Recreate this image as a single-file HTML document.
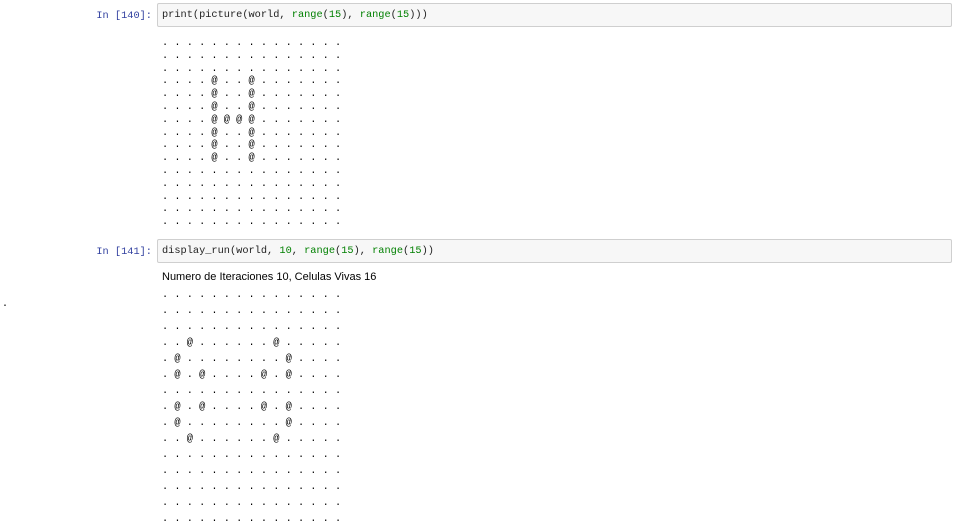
<!DOCTYPE html>
<html><head><style>
body{margin:0;background:#fff;width:962px;height:531px;overflow:hidden;position:relative;font-family:"Liberation Mono",monospace;}
.p{position:absolute;color:#303F9F;font-size:10.3px;right:810px;text-align:right;white-space:pre}
.box{position:absolute;left:157px;width:795px;background:#f7f7f7;border:1px solid #cfcfcf;border-radius:2px;box-sizing:border-box}
.code{position:absolute;left:4px;top:5px;font-size:10.3px;white-space:pre;color:#222}
.g{color:#008000}
pre{position:absolute;left:162px;margin:0;font-family:"Liberation Mono",monospace;font-size:10.3px;color:#000}
</style></head><body>
<div class="p" style="top:10px">In [140]:</div>
<div class="box" style="top:3px;height:24px"><div class="code">print(picture(world, <span class="g">range</span>(<span class="g">15</span>), <span class="g">range</span>(<span class="g">15</span>)))</div></div>
<pre style="top:37px;line-height:12.8px">. . . . . . . . . . . . . . .
. . . . . . . . . . . . . . .
. . . . . . . . . . . . . . .
. . . . @ . . @ . . . . . . .
. . . . @ . . @ . . . . . . .
. . . . @ . . @ . . . . . . .
. . . . @ @ @ @ . . . . . . .
. . . . @ . . @ . . . . . . .
. . . . @ . . @ . . . . . . .
. . . . @ . . @ . . . . . . .
. . . . . . . . . . . . . . .
. . . . . . . . . . . . . . .
. . . . . . . . . . . . . . .
. . . . . . . . . . . . . . .
. . . . . . . . . . . . . . .</pre>
<div class="p" style="top:246px">In [141]:</div>
<div class="box" style="top:239px;height:24px"><div class="code">display_run(world, <span class="g">10</span>, <span class="g">range</span>(<span class="g">15</span>), <span class="g">range</span>(<span class="g">15</span>))</div></div>
<div style="position:absolute;left:162px;top:271px;font-family:'Liberation Sans',sans-serif;font-size:11px">Numero de Iteraciones 10, Celulas Vivas 16</div>
<div style="position:absolute;left:2px;top:299px;font-size:10px">.</div>
<pre style="top:287px;line-height:16px">. . . . . . . . . . . . . . .
. . . . . . . . . . . . . . .
. . . . . . . . . . . . . . .
. . @ . . . . . . @ . . . . .
. @ . . . . . . . . @ . . . .
. @ . @ . . . . @ . @ . . . .
. . . . . . . . . . . . . . .
. @ . @ . . . . @ . @ . . . .
. @ . . . . . . . . @ . . . .
. . @ . . . . . . @ . . . . .
. . . . . . . . . . . . . . .
. . . . . . . . . . . . . . .
. . . . . . . . . . . . . . .
. . . . . . . . . . . . . . .
. . . . . . . . . . . . . . .</pre>
</body></html>
